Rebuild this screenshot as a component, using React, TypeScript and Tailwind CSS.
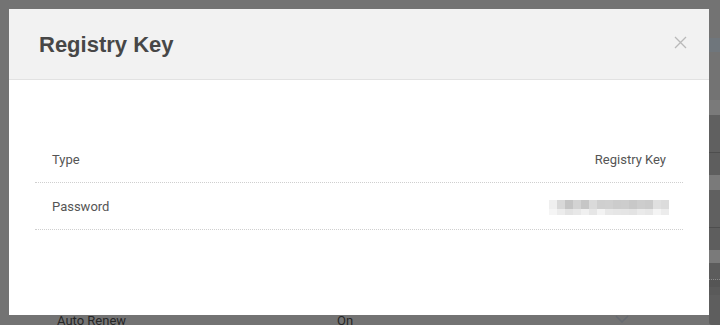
import React from "react";

const blurTop = [
  "#efefef", "#d8d8d8", "#c4c4c4", "#d3d3d3", "#c6c6c6", "#dadada", "#cfcfcf", "#d0d0d0",
  "#cccccc", "#cdcdcd", "#c8c8c8", "#cdcdcd", "#cbcbcb", "#e0e0e0", "#dcdcdc",
];
const blurBottom = [
  "#f5f5f5", "#ececec", "#e3e3e3", "#e8e8e8", "#f0f0f0", "#e6e6e6", "#f3f3f3", "#e8e8e8",
  "#e6e6e6", "#e5e5e5", "#e3e3e3", "#eaeaea", "#e7e7e7", "#f4f4f4", "#ececec",
];

function BlurredValue() {
  return (
    <div className="flex flex-col mr-[-3px]">
      <div className="flex">
        {blurTop.map((c, i) => (
          <div key={i} className="w-[8px] h-[9px]" style={{ backgroundColor: c }} />
        ))}
      </div>
      <div className="flex">
        {blurBottom.map((c, i) => (
          <div key={i} className="w-[8px] h-[6px]" style={{ backgroundColor: c }} />
        ))}
      </div>
    </div>
  );
}

export default function App() {
  return (
    <div className="relative w-[720px] h-[325px] overflow-hidden bg-[#737373] font-['Roboto',sans-serif]">
      {/* Page behind the overlay */}
      <div className="flex h-full">
        <div className="flex-1 flex flex-col">
          <div className="flex-1" />
          <div className="h-[12px] flex items-start text-[13px] leading-[15px] text-[#262626]">
            <span className="ml-[57px] w-[280px]">Auto Renew</span>
            <span>On</span>
            <svg className="ml-[262px] mt-[2px]" width="14" height="8" viewBox="0 0 14 8">
              <path d="M1 1l6 6 6-6" fill="none" stroke="#666a70" strokeWidth="1.5" />
            </svg>
          </div>
        </div>
        <div className="w-[11px] flex flex-col">
          <div className="h-[38px]" />
          <div className="h-[14px] bg-[#6f767c]" />
          <div className="h-[48px]" />
          <div className="h-[15px] bg-[#7a7a7a]" />
          <div className="h-[38px] bg-[#606060] border-b border-[#4e4e4e]" />
          <div className="h-[22px] bg-[#5e5e5e]" />
          <div className="h-[15px] bg-[#7a7a7a]" />
          <div className="h-[38px] bg-[#606060] border-b border-[#4e4e4e]" />
          <div className="h-[22px] bg-[#5e5e5e]" />
          <div className="h-[13px] bg-[#7a7a7a]" />
          <div className="h-[17px] bg-[#5c5c5c] border-b border-dotted border-[#8a8a8a]" />
          <div className="h-[7px] bg-[#555555]" />
          <div className="h-[8px] bg-[#5a5a5a]" />
          <div className="flex-1 bg-[#5e5e5e] rounded-bl-[3px]" />
        </div>
      </div>

      {/* Modal */}
      <div className="absolute left-[9px] top-[9px] w-[700px] h-[306px] bg-white flex flex-col">
        <div className="h-[71px] bg-[#f2f2f2] border-b border-[#e2e2e2] flex items-center justify-between pl-[30px] pr-[22px]">
          <h2 className="font-['Liberation_Sans',Arial,sans-serif] font-bold text-[22px] text-[#474747]">
            Registry Key
          </h2>
          <svg className="mb-[4px]" width="13" height="13" viewBox="0 0 13 13">
            <path d="M1 1l11 11M12 1L1 12" stroke="#b9b9b9" strokeWidth="1.3" fill="none" />
          </svg>
        </div>

        <div className="px-[26px] pt-[56px]">
          <div className="h-[47px] flex items-center justify-between px-[17px] pt-[2px] border-b border-dotted border-[#cfcfcf] text-[13px] text-[#555555]">
            <span>Type</span>
            <span>Registry Key</span>
          </div>
          <div className="h-[47px] flex items-center justify-between px-[17px] pt-[2px] border-b border-dotted border-[#cfcfcf] text-[13px] text-[#555555]">
            <span>Password</span>
            <BlurredValue />
          </div>
        </div>
      </div>
    </div>
  );
}
